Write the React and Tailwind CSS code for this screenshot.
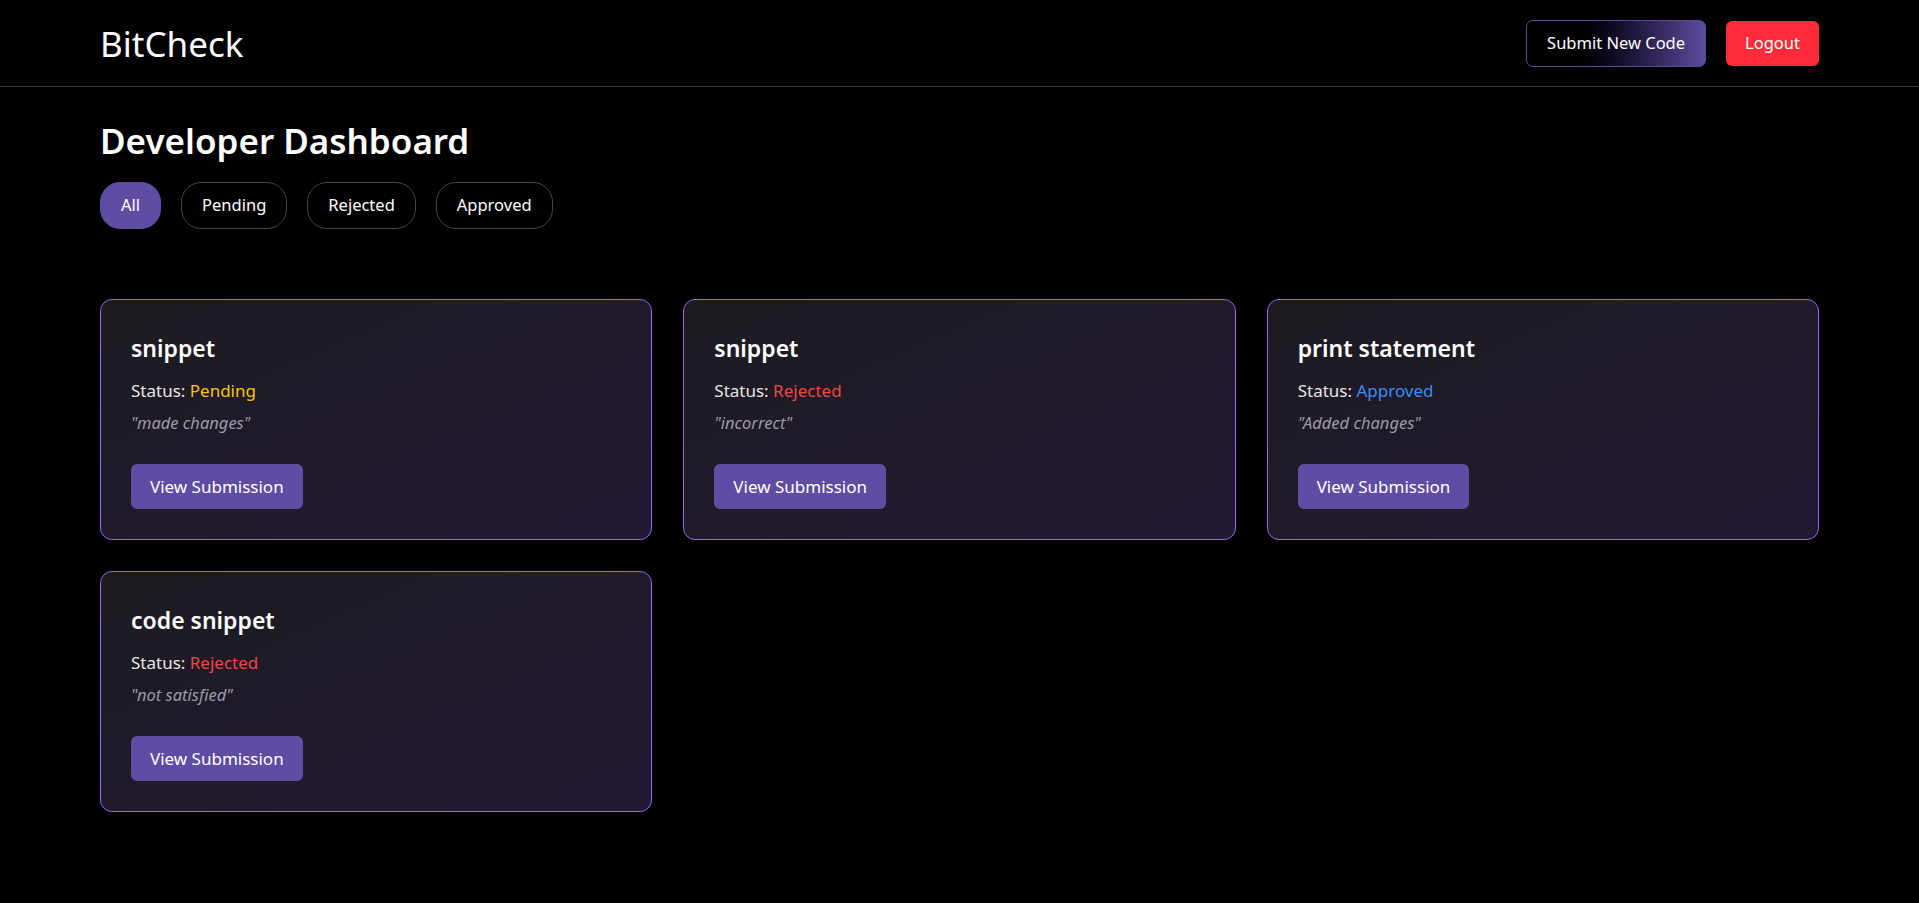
const submissions = [
  { title: "snippet", status: "Pending", note: "made changes" },
  { title: "snippet", status: "Rejected", note: "incorrect" },
  { title: "print statement", status: "Approved", note: "Added changes" },
  { title: "code snippet", status: "Rejected", note: "not satisfied" },
];

const statusColor = {
  Pending: "text-[#f5c400]",
  Rejected: "text-[#f04646]",
  Approved: "text-[#3b8cf6]",
};

const filters = ["All", "Pending", "Rejected", "Approved"];

function SubmissionCard({ item }) {
  return (
    <div className="flex h-[241px] flex-col rounded-[12px] border border-[#9d68e6] bg-gradient-to-br from-[#1c1b20] to-[#241934] px-[30px] pt-[32px] pb-[30px]">
      <h3 className="text-[23px] font-semibold leading-[32px] text-white">{item.title}</h3>
      <p className="mt-[15px] text-[17px] leading-[24px] text-[#e6e6e6]">
        Status: <span className={statusColor[item.status]}>{item.status}</span>
      </p>
      <p className="mt-[9px] text-[16.5px] italic leading-[22px] text-[#9a9aa6]">"{item.note}"</p>
      <div className="mt-auto">
        <button className="h-[45px] rounded-[6px] bg-[#5f4ca3] px-[19px] text-[17px] text-white">
          View Submission
        </button>
      </div>
    </div>
  );
}

export default function App() {
  return (
    <div className="min-h-screen bg-black font-['Noto_Sans',sans-serif] text-white">
      <header className="flex h-[87px] items-center justify-between border-b border-[#3a3a3a] px-[100px]">
        <span className="text-[35px] leading-none">BitCheck</span>
        <div className="flex items-center gap-[20px]">
          <button className="h-[47px] rounded-[7px] border border-[#5b4a98] bg-gradient-to-r from-[#000000] from-20% to-[#5e4ca0] px-[20px] text-[16.5px] text-white">
            Submit New Code
          </button>
          <button className="h-[45px] rounded-[6px] bg-[#ff2b39] px-[19px] text-[16.5px] text-white">
            Logout
          </button>
        </div>
      </header>

      <main className="px-[100px] pt-[30px]">
        <h1 className="text-[35px] font-semibold leading-[48px]">Developer Dashboard</h1>
        <div className="mt-[17px] flex gap-[20px]">
          {filters.map((f) => (
            <button
              key={f}
              className={
                f === "All"
                  ? "h-[47px] rounded-[20px] border border-[#5f4ca3] bg-[#5f4ca3] px-[20px] text-[16.5px] text-white"
                  : "h-[47px] rounded-[20px] border border-[#444444] bg-black px-[20px] text-[16.5px] text-white"
              }
            >
              {f}
            </button>
          ))}
        </div>

        <div className="mt-[70px] grid grid-cols-3 gap-[31px]">
          {submissions.map((item, i) => (
            <SubmissionCard key={i} item={item} />
          ))}
        </div>
      </main>
    </div>
  );
}
